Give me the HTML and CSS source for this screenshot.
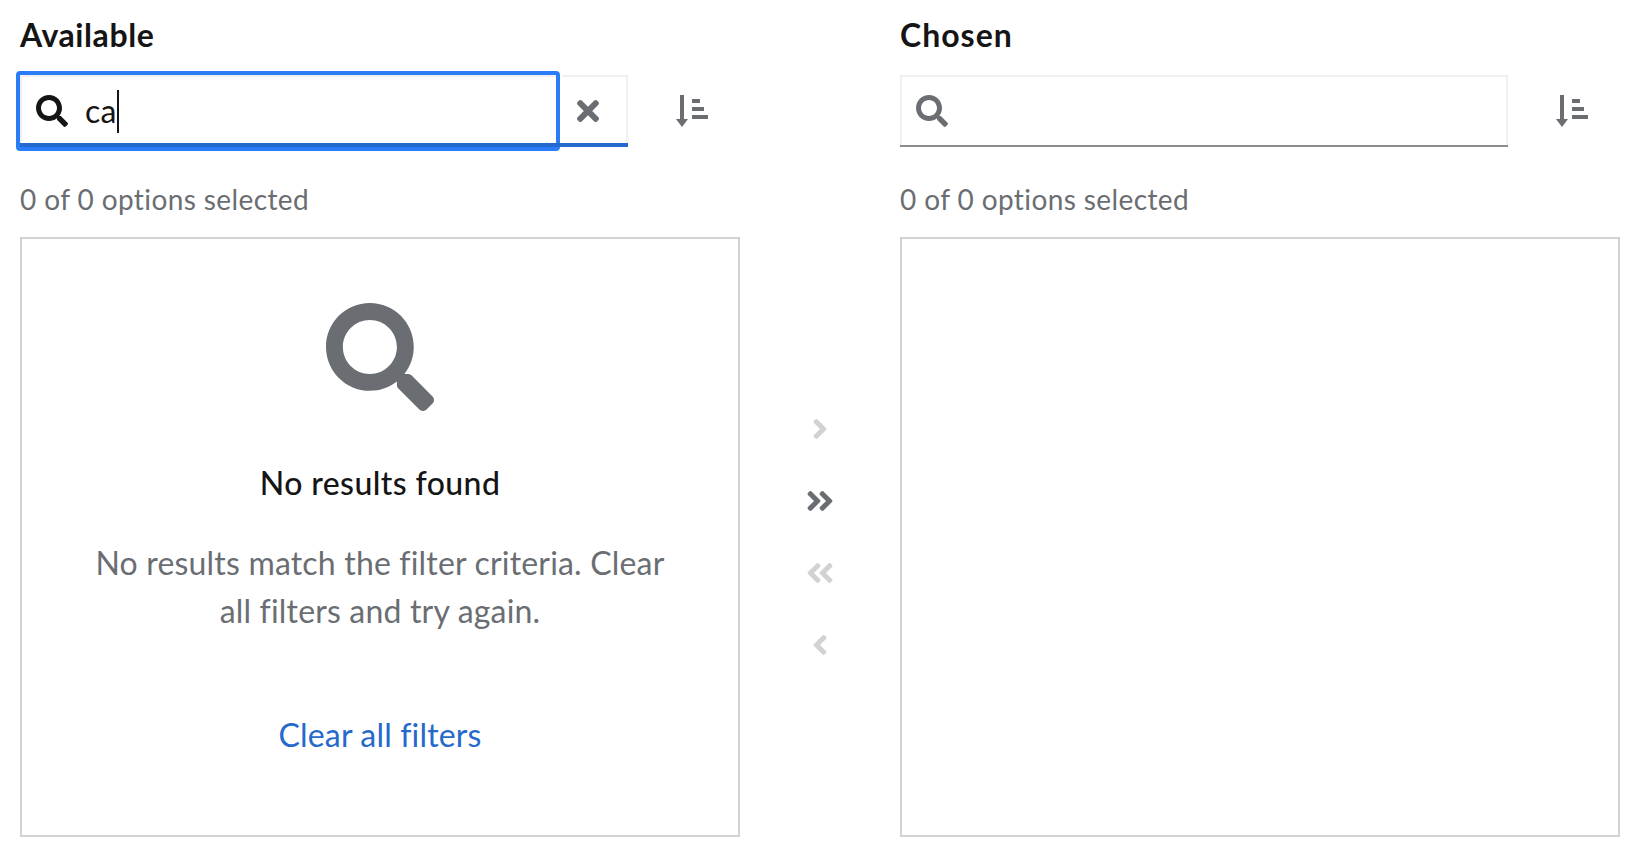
FILE: index.html
```html
<!DOCTYPE html>
<html lang="en">
<head>
<meta charset="utf-8">
<title>Dual list selector</title>
<link rel="stylesheet" href="styles.css">
</head>
<body>
<svg class="sprite" aria-hidden="true">
  <symbol id="search" viewBox="0 0 512 512"><path d="M505 442.7L405.3 343c-4.5-4.5-10.6-7-17-7H372c27.6-35.3 44-79.7 44-128C416 93.1 322.9 0 208 0S0 93.1 0 208s93.1 208 208 208c48.3 0 92.7-16.4 128-44v16.3c0 6.4 2.5 12.5 7 17l99.7 99.7c9.4 9.4 24.6 9.4 33.9 0l28.3-28.3c9.4-9.4 9.4-24.6.1-34zM208 336c-70.7 0-128-57.2-128-128 0-70.7 57.2-128 128-128 70.7 0 128 57.2 128 128 0 70.7-57.2 128-128 128z"/></symbol>
  <symbol id="times" viewBox="0 0 352 512"><path d="M242.72 256l100.07-100.07c12.28-12.28 12.28-32.19 0-44.48l-22.24-22.24c-12.28-12.28-32.19-12.28-44.48 0L176 189.28 75.93 89.21c-12.28-12.28-32.19-12.28-44.48 0L9.21 111.45c-12.28 12.28-12.28 32.19 0 44.48L109.28 256 9.21 356.07c-12.28 12.28-12.28 32.19 0 44.48l22.24 22.24c12.28 12.28 32.2 12.28 44.48 0L176 322.72l100.07 100.07c12.28 12.28 32.2 12.28 44.48 0l22.24-22.24c12.28-12.28 12.28-32.19 0-44.48L242.72 256z"/></symbol>
  <symbol id="sort" viewBox="0 0 32 32"><path d="M4 0h4v24h4l-6 8-6-8h4zM16 4h8v4h-8zM16 12h12v4H16zM16 20h16v4H16z"/></symbol>
  <symbol id="angle" viewBox="0 0 256 512"><path d="M224.3 273l-136 136c-9.4 9.4-24.6 9.4-33.9 0l-22.6-22.6c-9.4-9.4-9.4-24.6 0-33.9l96.4-96.4-96.4-96.4c-9.4-9.4-9.4-24.6 0-33.9L54.3 103c9.4-9.4 24.6-9.4 33.9 0l136 136c9.5 9.4 9.5 24.6.1 34z"/></symbol>
  <symbol id="angles" viewBox="0 0 448 512"><path d="M224.3 273l-136 136c-9.4 9.4-24.6 9.4-33.9 0l-22.6-22.6c-9.4-9.4-9.4-24.6 0-33.9l96.4-96.4-96.4-96.4c-9.4-9.4-9.4-24.6 0-33.9L54.3 103c9.4-9.4 24.6-9.4 33.9 0l136 136c9.5 9.4 9.5 24.6.1 34zm192-34l-136-136c-9.4-9.4-24.6-9.4-33.9 0l-22.6 22.6c-9.4 9.4-9.4 24.6 0 33.9l96.4 96.4-96.4 96.4c-9.4 9.4-9.4 24.6 0 33.9l22.6 22.6c9.4 9.4 24.6 9.4 33.9 0l136-136c9.4-9.2 9.4-24.4 0-33.8z"/></symbol>
</svg>
<main class="dual-list">
  <section class="pane">
    <h2 class="pane-title">Available</h2>
    <div class="tools">
      <div class="search search-active">
        <div class="field field-focused">
          <svg class="icon"><use href="#search"/></svg>
          <span class="query">ca</span><span class="caret"></span>
        </div>
        <div class="clear"><svg class="icon-times"><use href="#times"/></svg></div>
      </div>
      <svg class="icon sort"><use href="#sort"/></svg>
    </div>
    <p class="status">0 of 0 options selected</p>
    <div class="list">
      <svg class="empty-icon"><use href="#search"/></svg>
      <h3 class="empty-title">No results found</h3>
      <p class="empty-body">No results match the filter criteria. Clear<br>all filters and try again.</p>
      <a class="empty-link">Clear all filters</a>
    </div>
  </section>
  <div class="controls">
    <svg class="single disabled"><use href="#angle"/></svg>
    <svg class="double"><use href="#angles"/></svg>
    <svg class="double disabled flip"><use href="#angles"/></svg>
    <svg class="single disabled flip"><use href="#angle"/></svg>
  </div>
  <section class="pane">
    <h2 class="pane-title pane-title-chosen">Chosen</h2>
    <div class="tools">
      <div class="search">
        <div class="field"><svg class="icon"><use href="#search"/></svg></div>
      </div>
      <svg class="icon sort"><use href="#sort"/></svg>
    </div>
    <p class="status">0 of 0 options selected</p>
    <div class="list"></div>
  </section>
</main>
</body>
</html>
```
FILE: styles.css
```css
* { box-sizing: border-box; }
body {
  margin: 0;
  background: #fff;
  color: #151515;
  font: 400 32px/48px Lato, "Liberation Sans", sans-serif;
}
h2, h3, p { margin: 0; }
svg { display: block; fill: #6a6e73; }
.sprite { position: absolute; width: 0; height: 0; }

.dual-list {
  display: grid;
  grid-template-columns: 720px 160px 720px;
  padding: 11px 20px 0;
}
.pane { display: flex; flex-direction: column; }
.pane-title {
  font-size: 32px;
  font-weight: 700;
  letter-spacing: 0.58px;
}
.pane-title-chosen { letter-spacing: 1px; }

.tools {
  display: flex;
  align-items: center;
  gap: 48px;
  margin-top: 16px;
}
.search {
  display: flex;
  width: 608px;
  height: 72px;
  box-shadow: inset 0 -2px #8a8d90, inset 0 0 0 2px #f0f0f0;
}
.search-active { box-shadow: none; }
.field {
  display: flex;
  align-items: center;
  padding: 0 16px;
}
.field .icon { margin-top: 0; }
.field-focused {
  width: 536px;
  box-shadow: inset 0 -4px #2469cb, inset 2px 2px #f0f0f0;
  outline: 4px solid #2b7df7;
  border-radius: 0.1px;
}
.search-active .icon { fill: #151515; }
.icon { width: 32px; height: 32px; flex: none; }
.query { margin: 0 0 0 17px; letter-spacing: 0.3px; }
.caret { width: 2px; height: 43px; margin: 1px 0 0; background: #151515; }
/* Starts under the focus ring so the active underline runs across it. */
.clear {
  position: relative;
  flex: 1;
  padding: 20px 0 0 21px;
  background: linear-gradient(#f0f0f0, #f0f0f0) 6px 0 / 100% 2px no-repeat;
  box-shadow: inset 0 -4px #2469cb, inset -2px 0 #f0f0f0;
}
.icon-times { width: 22px; height: 32px; }

.status {
  margin-top: 31px;
  color: #6a6e73;
  font-size: 28px;
  line-height: 42px;
  letter-spacing: 0.4px;
}
.list {
  display: flex;
  flex-direction: column;
  align-items: center;
  height: 600px;
  margin-top: 17px;
  padding-top: 64px;
  border: 2px solid #d2d2d2;
  text-align: center;
}
.empty-icon { width: 108px; height: 108px; }
.empty-title {
  margin-top: 48px;
  font-size: 32px;
  font-weight: 500;
  letter-spacing: 0.4px;
}
.empty-body {
  margin-top: 32px;
  color: #6a6e73;
  letter-spacing: 0.18px;
}
.empty-link {
  margin-top: 76px;
  color: #2469cb;
  letter-spacing: 0.16px;
}

.controls {
  display: flex;
  flex-direction: column;
  align-items: center;
  gap: 40px;
  padding-top: 402px;
}
.controls svg { height: 32px; }
.single { width: 16px; }
.double { width: 28px; }
.disabled { fill: #d2d2d2; }
.flip { transform: scaleX(-1); }
```
